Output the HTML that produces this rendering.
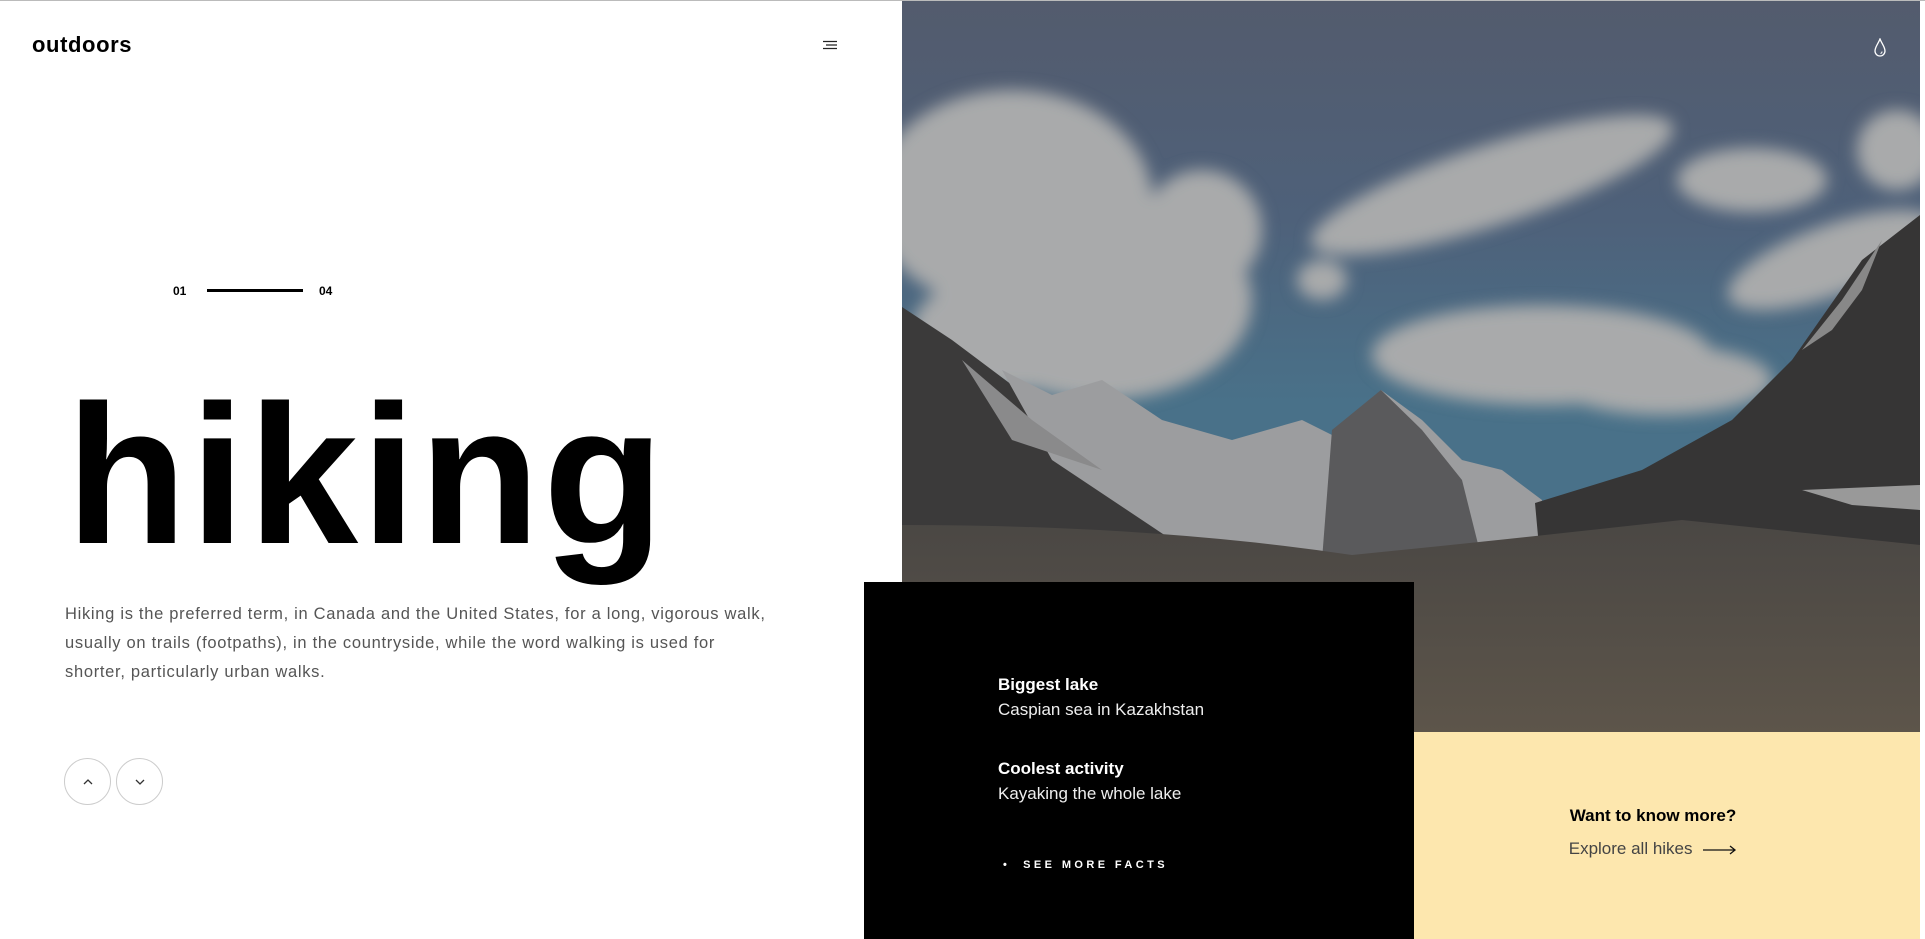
<!DOCTYPE html>
<html><head><meta charset="utf-8"><style>
*{margin:0;padding:0;box-sizing:border-box}
html,body{width:1925px;height:939px;overflow:hidden;background:#fff;font-family:"Liberation Sans",sans-serif;position:relative}
.topline{position:absolute;left:0;top:0;width:1925px;height:1px;background:#bbb;z-index:5}
.logo{position:absolute;left:32px;top:32px;font-size:22px;font-weight:bold;color:#000;letter-spacing:0.6px}
.ham{position:absolute;left:822px;top:40px}
.counter{position:absolute;top:284px;font-size:12px;font-weight:bold;color:#000}
.bar{position:absolute;left:207px;top:289px;width:96px;height:3px;background:#000}
.hiking{position:absolute;left:66px;top:376px;font-size:198px;font-weight:bold;letter-spacing:3px;line-height:1;color:#000}
.para{position:absolute;left:65px;top:600px;width:715px;font-size:16.5px;line-height:29px;color:#555;letter-spacing:0.7px}
.btn{position:absolute;top:758px;width:47px;height:47px;border:1.5px solid #ccc;border-radius:50%}
.btn svg{position:absolute;left:16px;top:16px}
.img{position:absolute;left:902px;top:0;width:1018px;height:732px;overflow:hidden}
.black{position:absolute;left:864px;top:582px;width:550px;height:357px;background:#000;color:#fff}
.black b{position:absolute;left:134px;font-size:17px}
.black span{position:absolute;left:134px;font-size:17px;color:#eee;font-weight:300}
.facts{position:absolute;left:139px;top:277px;font-size:11px;font-weight:bold;letter-spacing:3.4px}
.yellow{position:absolute;left:1414px;top:732px;width:506px;height:207px;background:#fde7ae;text-align:center}
.yellow b{position:absolute;left:-14px;width:100%;top:74px;font-size:17px;color:#000}
.yellow span{position:absolute;left:-14px;width:100%;top:107px;font-size:17px;color:#444}
</style></head><body>
<div class="topline"></div>
<div class="logo">outdoors</div>
<svg class="ham" width="16" height="12" viewBox="0 0 16 12"><path d="M1 1.5H15M4 5H15M1 8.5H15" stroke="#222" stroke-width="1.3"/></svg>
<div class="counter" style="left:173px">01</div>
<div class="bar"></div>
<div class="counter" style="left:319px">04</div>
<div class="hiking">hiking</div>
<div class="para">Hiking is the preferred term, in Canada and the United States, for a long, vigorous walk, usually on trails (footpaths), in the countryside, while the word walking is used for shorter, particularly urban walks.</div>
<div class="btn" style="left:64px"><svg width="14" height="14" viewBox="0 0 14 14"><path d="M3 9L7 5L11 9" stroke="#333" stroke-width="1.3" fill="none"/></svg></div>
<div class="btn" style="left:116px"><svg width="14" height="14" viewBox="0 0 14 14"><path d="M3 5L7 9L11 5" stroke="#333" stroke-width="1.3" fill="none"/></svg></div>

<div class="img">
<svg width="1018" height="732" viewBox="0 0 1018 732">
<defs>
<linearGradient id="sky" x1="0" y1="0" x2="0" y2="1"><stop offset="0" stop-color="#535b6d"/><stop offset="0.3" stop-color="#4e617a"/><stop offset="0.55" stop-color="#497189"/></linearGradient>
<linearGradient id="gr" x1="0" y1="0" x2="0" y2="1"><stop offset="0" stop-color="#4a4744"/><stop offset="1" stop-color="#5d554a"/></linearGradient>
<filter id="bl"><feGaussianBlur stdDeviation="8"/></filter>
</defs>
<rect width="1018" height="732" fill="url(#sky)"/>
<g fill="#a9aaab" filter="url(#bl)">
<ellipse cx="110" cy="200" rx="140" ry="110"/>
<ellipse cx="200" cy="300" rx="150" ry="100"/>
<ellipse cx="300" cy="230" rx="60" ry="60"/>
<ellipse cx="120" cy="330" rx="110" ry="60"/>
<ellipse cx="590" cy="185" rx="190" ry="40" transform="rotate(-18 590 185)"/>
<ellipse cx="850" cy="180" rx="75" ry="32"/>
<ellipse cx="930" cy="260" rx="110" ry="35" transform="rotate(-20 930 260)"/>
<ellipse cx="995" cy="150" rx="40" ry="40"/>
<ellipse cx="640" cy="355" rx="170" ry="50"/>
<ellipse cx="760" cy="380" rx="110" ry="35"/>
<ellipse cx="420" cy="280" rx="25" ry="20"/>
</g>
<path d="M0 307L50 340L130 400L200 440L280 480L340 520L360 580L0 580Z" fill="#3b3a3a"/>
<path d="M100 370L150 395L200 380L260 420L330 440L400 420L450 445L479 390L520 420L560 460L600 470L640 500L640 560L300 560L150 460Z" fill="#9c9d9f"/>
<path d="M430 430L479 390L520 430L560 480L580 560L420 560Z" fill="#5a5a5c"/>
<path d="M60 360L130 420L200 470L110 440Z" fill="#8a8a8b"/>
<path d="M1018 215L960 260L890 360L830 420L740 470L633 503L640 580L1018 580Z" fill="#363535"/>
<path d="M980 240L940 300L900 350L930 330L960 290Z" fill="#888"/>
<path d="M900 490L1018 485L1018 510L950 505Z" fill="#999"/>
<path d="M0 525Q250 525 450 555Q600 540 780 520L1018 545L1018 732L0 732Z" fill="url(#gr)"/>
</svg>
<svg style="position:absolute;left:971px;top:38px" width="14" height="20" viewBox="0 0 14 20"><path d="M7 1C5 6 2 9 2 13a5 5 0 0 0 10 0C12 9 9 6 7 1Z" stroke="#fff" stroke-width="1.3" fill="none"/><path d="M7.5 15.5a2 2 0 0 0 1.5-2" stroke="#fff" stroke-width="1" fill="none"/></svg>
</div>

<div class="black">
<b style="top:93px">Biggest lake</b>
<span style="top:118px">Caspian sea in Kazakhstan</span>
<b style="top:177px">Coolest activity</b>
<span style="top:202px">Kayaking the whole lake</span>
<div class="facts">•&nbsp; SEE MORE FACTS</div>
</div>
<div class="yellow">
<b>Want to know more?</b>
<span>Explore all hikes <svg width="34" height="10" viewBox="0 0 34 10" style="vertical-align:middle;margin-left:6px"><path d="M0 5H32M27 1L32 5L27 9" stroke="#111" stroke-width="1.3" fill="none"/></svg></span>
</div>
</body></html>
